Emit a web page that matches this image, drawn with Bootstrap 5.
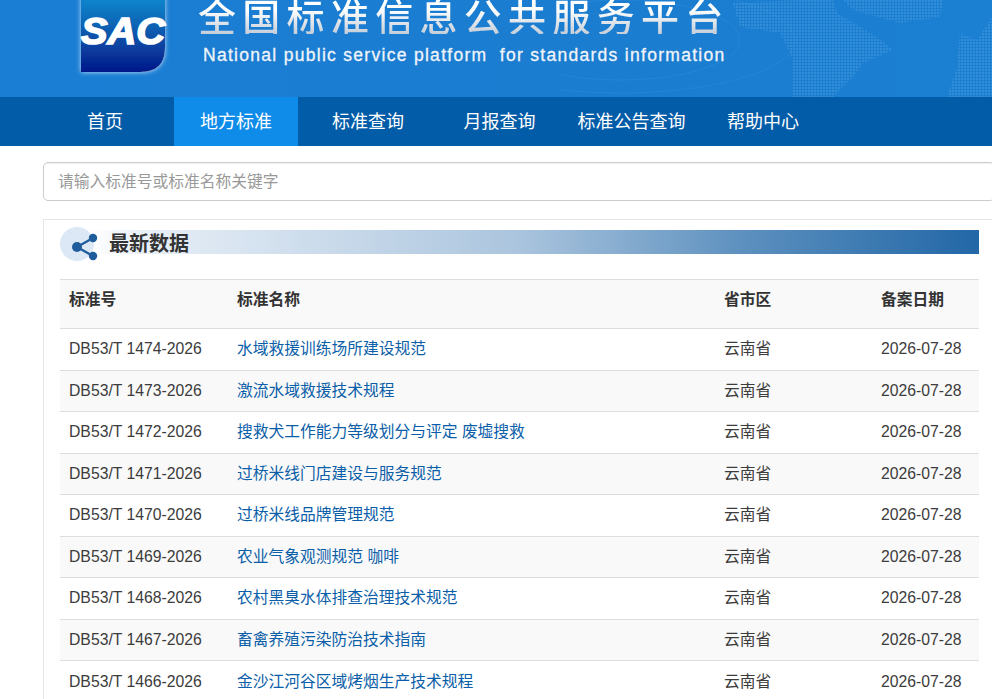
<!DOCTYPE html>
<html lang="zh-CN">
<head>
<meta charset="utf-8">
<title>全国标准信息公共服务平台</title>
<link rel="stylesheet" href="https://cdn.jsdelivr.net/npm/bootstrap@5.3.0/dist/css/bootstrap.min.css">
<style>
html,body{height:699px;overflow:hidden}
body{font-family:"Liberation Sans","Noto Sans CJK SC",sans-serif;font-size:16px;color:#3c3c3c;background:#fff}
.site-head{height:97px;background:linear-gradient(90deg,#1a7ed4,#1b7dd0 60%,#1b7fd2);overflow:hidden;padding-left:76px}
.site-logo{flex:none;margin-top:-14px;width:96px;height:96px;overflow:visible}
.site-words{color:#f0f4f9;margin-left:31px;position:relative;z-index:1}
.cn-title{font-family:"Noto Sans CJK SC",sans-serif;font-weight:500;font-size:38px;line-height:38px;letter-spacing:6.3px;margin-top:-4px;margin-left:-5px;white-space:nowrap;background:linear-gradient(#fff 35%,#c4ced9);-webkit-background-clip:text;background-clip:text;color:transparent}
.en-title{font-size:17.5px;line-height:20px;letter-spacing:1.29px;margin-top:11px;white-space:pre;-webkit-text-stroke:.3px #f0f4f9}
.site-map{position:absolute;left:560px;top:0;pointer-events:none}
.main-nav{height:49px;background:#035ca8;padding-left:36px}
.main-nav a{color:#fff;font-family:"Noto Sans CJK SC",sans-serif;font-size:18px;line-height:47px;text-decoration:none;height:49px;display:block;text-align:center}
.main-nav a.on{background:#0f8be9}
.nv1{width:138px}.nv2{width:124px}.nv3{width:140px}.nv4{width:123px}.nv5{width:141px}.nv6{width:122px}
.page-wrap{width:952px;margin-left:43px;padding-top:16px}
.find-box{height:39px;border:1px solid #ccc;border-radius:5px;padding:0 14px;font-size:15.75px;box-shadow:inset 0 1px 1px rgba(0,0,0,.06)}
.find-box::placeholder{color:#999}
.data-panel{margin-top:18px;border:1px solid #e5e5e5;padding:8px 15px 0 16px}
.panel-head{height:34px;position:relative}
.panel-strip{position:absolute;left:30px;top:2px;height:24px;width:889px;background:linear-gradient(90deg,#fff 0,#e8eff7 6%,#abc5de 48%,#5b8fbe 74%,#2267a7 100%)}
.share-mark{position:absolute;left:0;top:-1px;z-index:1}
.panel-title{position:absolute;left:49px;top:1px;font-family:"Noto Sans CJK SC",sans-serif;font-weight:700;font-size:20px;line-height:27px;color:#333;z-index:1;margin:0}
.std-table{width:919px;table-layout:fixed;margin:17px 0 0;font-size:15.75px;border-collapse:collapse;--bs-table-color:#3c3c3c}
.std-table th,.std-table td{padding:0 0 1px 9px;vertical-align:middle;border-top:1px solid #ddd;border-bottom:0;height:41.5px;white-space:nowrap}
.std-table thead th{height:49.4px;background:#f9f9f9;color:#333;font-weight:700;padding-bottom:9px}
.std-table tbody tr:nth-child(even) td{background:#f9f9f9}
.std-table td a{color:#0b5ea8;text-decoration:none}
.c1{width:168px}.c2{width:487px}.c3{width:157px}.c4{width:107px}
</style>
</head>
<body>
<header class="site-head d-flex position-relative">
  <svg class="site-map" width="432" height="97" viewBox="0 0 432 97" aria-hidden="true">
    <defs><pattern id="dots" width="3" height="3" patternUnits="userSpaceOnUse"><rect width="2" height="2" fill="#4a9de2"/></pattern></defs>
    <g fill="none" stroke="#fff" stroke-opacity=".05">
      <ellipse cx="60" cy="40" rx="120" ry="40"/>
      <ellipse cx="60" cy="40" rx="175" ry="53"/>
    </g>
    <g fill="url(#dots)" opacity=".5" transform="translate(170 0)">
      <path d="M3 3 70 0H103L107 13 147 37 163 50 133 63 123 77 103 97H63V60L50 33 10 27Z"/>
      <path d="M113 0H213L210 17 170 23 123 10Z"/>
      <path d="M230 33 247 40 262 17V97H217L227 67Z"/>
    </g>
  </svg>
  <svg class="site-logo" viewBox="0 0 96 96" aria-hidden="true">
    <defs>
      <linearGradient id="lg" x1="0" y1="0" x2="0" y2="1"><stop offset="0" stop-color="#1296d8"/><stop offset=".45" stop-color="#0a63b4"/><stop offset="1" stop-color="#05188a"/></linearGradient>
      <filter id="gl" x="-15%" y="-15%" width="130%" height="130%"><feDropShadow dx="0" dy="0" stdDeviation="2.5" flood-color="#d8ecfb" flood-opacity=".9"/></filter>
    </defs>
    <path d="M5 12Q5 1 15 1H89V62Q89 86 64 86H5Z" fill="url(#lg)" filter="url(#gl)"/>
    <text x="5" y="58" font-family="Liberation Sans" font-size="37" font-weight="700" font-style="italic" fill="#fff" stroke="#fff" stroke-width="1.6" textLength="84" lengthAdjust="spacingAndGlyphs">SAC</text>
  </svg>
  <div class="site-words">
    <div class="cn-title">全国标准信息公共服务平台</div>
    <div class="en-title">National public service platform  for standards information</div>
  </div>
</header>
<nav class="main-nav d-flex">
  <a class="nv1" href="#">首页</a>
  <a class="nv2 on" href="#">地方标准</a>
  <a class="nv3" href="#">标准查询</a>
  <a class="nv4" href="#">月报查询</a>
  <a class="nv5" href="#">标准公告查询</a>
  <a class="nv6" href="#">帮助中心</a>
</nav>
<main class="page-wrap">
  <input class="form-control find-box" type="text" placeholder="请输入标准号或标准名称关键字">
  <section class="data-panel">
    <div class="panel-head">
      <div class="panel-strip"></div>
      <svg class="share-mark" width="40" height="36" viewBox="0 0 40 36" aria-hidden="true">
        <circle cx="17" cy="17" r="17" fill="#dce8f6"/>
        <path d="M17 20 33 11M17 20 33 29" stroke="#1f5d9c" stroke-width="2.4"/>
        <circle cx="17" cy="20" r="5" fill="#1f5d9c"/><circle cx="33" cy="11" r="4.2" fill="#1f5d9c"/><circle cx="33" cy="29" r="4.2" fill="#1f5d9c"/>
      </svg>
      <h2 class="panel-title">最新数据</h2>
    </div>
    <table class="table std-table">
      <colgroup><col class="c1"><col class="c2"><col class="c3"><col class="c4"></colgroup>
      <thead><tr><th>标准号</th><th>标准名称</th><th>省市区</th><th>备案日期</th></tr></thead>
      <tbody>
        <tr><td>DB53/T 1474-2026</td><td><a href="#">水域救援训练场所建设规范</a></td><td>云南省</td><td>2026-07-28</td></tr>
        <tr><td>DB53/T 1473-2026</td><td><a href="#">激流水域救援技术规程</a></td><td>云南省</td><td>2026-07-28</td></tr>
        <tr><td>DB53/T 1472-2026</td><td><a href="#">搜救犬工作能力等级划分与评定 废墟搜救</a></td><td>云南省</td><td>2026-07-28</td></tr>
        <tr><td>DB53/T 1471-2026</td><td><a href="#">过桥米线门店建设与服务规范</a></td><td>云南省</td><td>2026-07-28</td></tr>
        <tr><td>DB53/T 1470-2026</td><td><a href="#">过桥米线品牌管理规范</a></td><td>云南省</td><td>2026-07-28</td></tr>
        <tr><td>DB53/T 1469-2026</td><td><a href="#">农业气象观测规范 咖啡</a></td><td>云南省</td><td>2026-07-28</td></tr>
        <tr><td>DB53/T 1468-2026</td><td><a href="#">农村黑臭水体排查治理技术规范</a></td><td>云南省</td><td>2026-07-28</td></tr>
        <tr><td>DB53/T 1467-2026</td><td><a href="#">畜禽养殖污染防治技术指南</a></td><td>云南省</td><td>2026-07-28</td></tr>
        <tr><td>DB53/T 1466-2026</td><td><a href="#">金沙江河谷区域烤烟生产技术规程</a></td><td>云南省</td><td>2026-07-28</td></tr>
      </tbody>
    </table>
  </section>
</main>
<script src="https://cdn.jsdelivr.net/npm/bootstrap@5.3.0/dist/js/bootstrap.bundle.min.js"></script>
</body>
</html>
